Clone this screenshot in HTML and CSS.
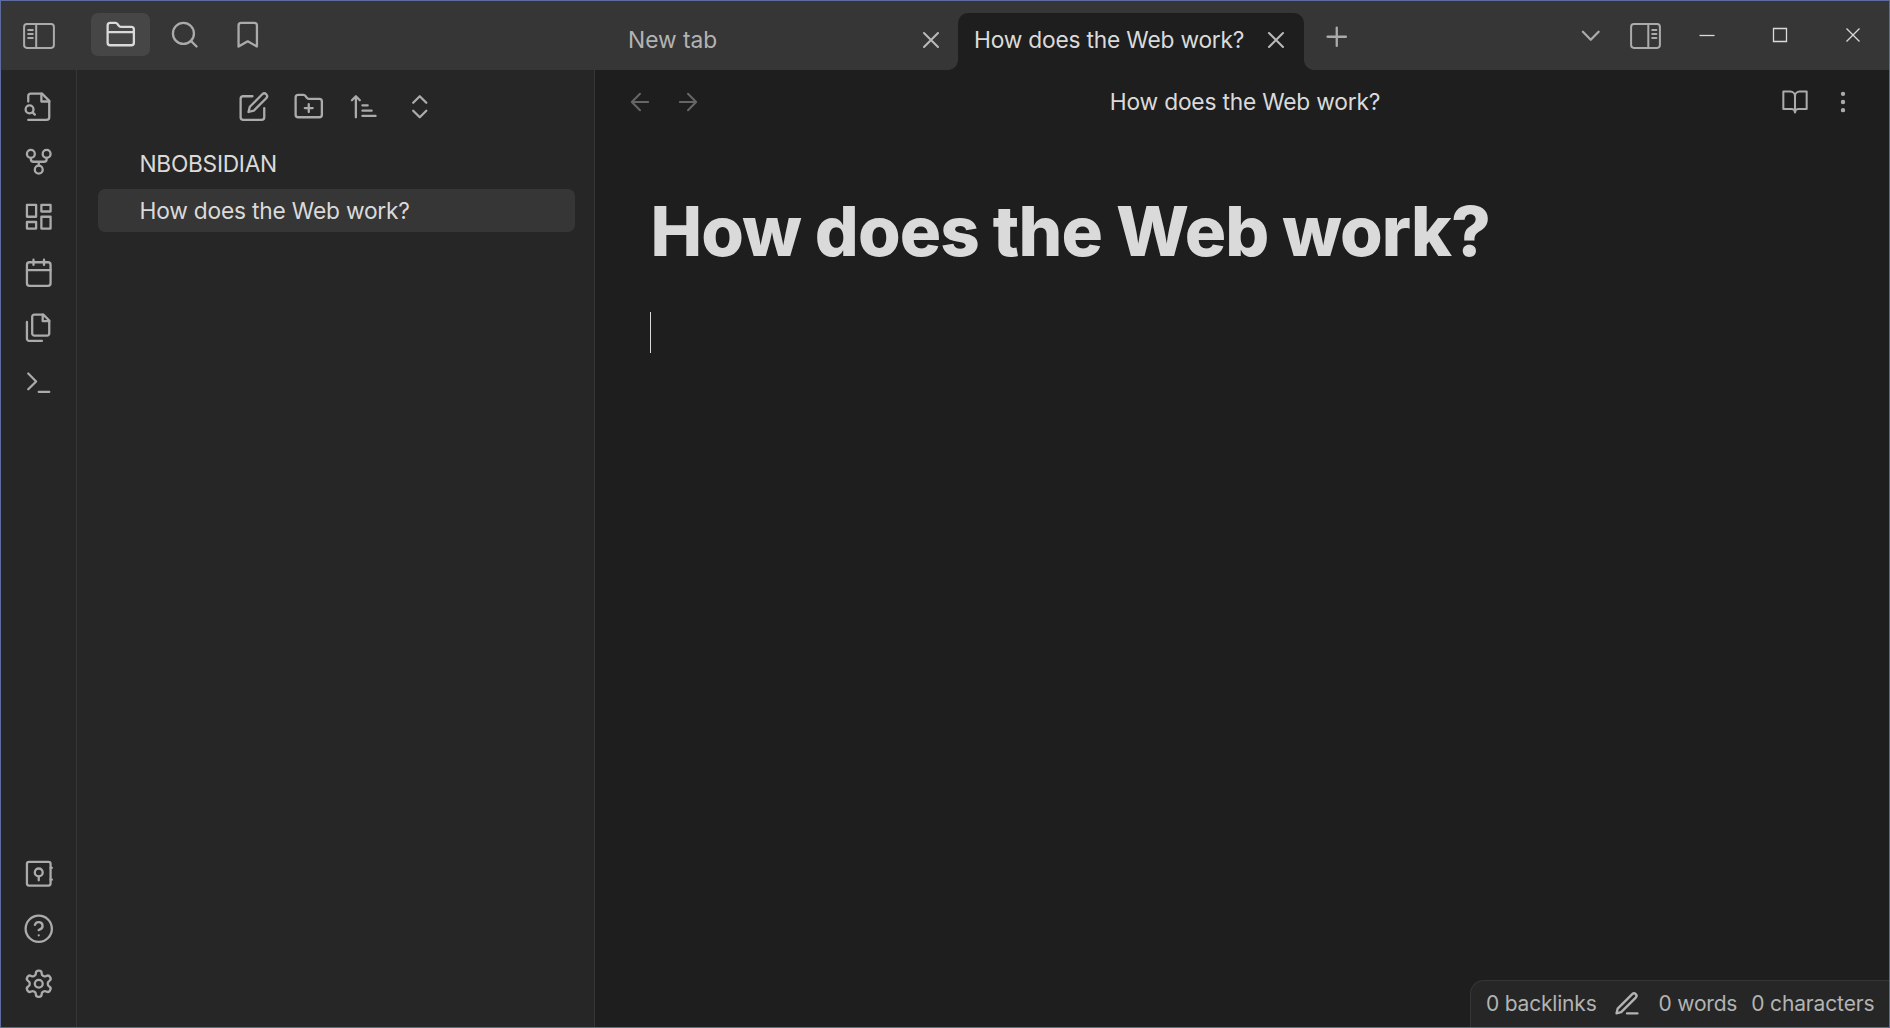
FILE: index.html
```html
<!DOCTYPE html>
<html lang="en">
<head>
<meta charset="utf-8">
<title>How does the Web work? - nbobsidian</title>
<link rel="stylesheet" href="styles.css">
</head>
<body>
<div class="window">
  <header class="titlebar">
    <div class="titlebar-left">
      <button class="panel-toggle" aria-label="Collapse sidebar"><svg class="panel-icon" viewBox="0 0 32 26"><rect x="1.1" y="1.1" width="29.8" height="23.8" rx="2.8"/><path d="M13.2 1v24M5.2 7h4.6M5.2 11h4.6M5.2 15h4.6"/></svg></button>
      <nav class="side-tabs">
        <button class="side-tab active" aria-label="Files"><svg class="icon" viewBox="0 0 24 24"><path d="M4 20h16a2 2 0 0 0 2-2V8a2 2 0 0 0-2-2h-7.93a2 2 0 0 1-1.66-.9l-.82-1.2A2 2 0 0 0 7.93 3H4a2 2 0 0 0-2 2v13c0 1.1.9 2 2 2ZM2 10h20"/></svg></button>
        <button class="side-tab" aria-label="Search"><svg class="icon" viewBox="0 0 24 24"><circle cx="11" cy="11" r="8"/><path d="m21 21-4.3-4.3"/></svg></button>
        <button class="side-tab" aria-label="Bookmarks"><svg class="icon" viewBox="0 0 24 24"><path d="m19 21-7-4-7 4V5a2 2 0 0 1 2-2h10a2 2 0 0 1 2 2v16z"/></svg></button>
      </nav>
    </div>
    <div class="tabs">
      <div class="tab tab-new"><span>New tab</span><svg class="icon small close" viewBox="0 0 24 24"><path d="M18 6 6 18M6 6l12 12"/></svg></div>
      <div class="tab tab-active"><span>How does the Web work?</span><svg class="icon small close" viewBox="0 0 24 24"><path d="M18 6 6 18M6 6l12 12"/></svg></div>
      <button class="add-tab" aria-label="New tab"><svg class="icon" viewBox="0 0 24 24"><path d="M12 5v14M5 12h14"/></svg></button>
    </div>
    <div class="titlebar-right">
      <svg class="icon" viewBox="0 0 24 24"><path d="m6 9 6 6 6-6"/></svg>
      <svg class="panel-icon" viewBox="0 0 32 26"><rect x="1.1" y="1.1" width="28.8" height="23.8" rx="2.8"/><path d="M18.3 1v24M22.2 7h4.2M22.2 11h4.2M22.2 15h4.2"/></svg>
    </div>
    <div class="window-controls">
      <svg viewBox="0 0 16 16"><path d="M.5 8.5h15"/></svg>
      <svg viewBox="0 0 16 16"><path d="M1.5 1.5h13v13h-13z"/></svg>
      <svg viewBox="0 0 16 16"><path d="m1.500 1.500 13 13M14.500 1.500l-13 13"/></svg>
    </div>
  </header>

  <div class="workspace">
    <aside class="ribbon">
      <div class="ribbon-group">
        <svg class="icon" viewBox="0 0 24 24"><path d="M4 8V4a2 2 0 0 1 2-2h8.500L20 7.500V20a2 2 0 0 1-2 2H4"/><path d="M14 2v6h6"/><circle cx="5" cy="14" r="3"/><path d="m9 18-1.500-1.500"/></svg>
        <svg class="icon" viewBox="0 0 24 24"><circle cx="12" cy="18" r="3"/><circle cx="6" cy="6" r="3"/><circle cx="18" cy="6" r="3"/><path d="M18 9v1a2 2 0 0 1-2 2H8a2 2 0 0 1-2-2V9M12 12v3"/></svg>
        <svg class="icon" viewBox="0 0 24 24"><path d="M3 3h7v9H3zM14 3h7v5h-7zM14 12h7v9h-7zM3 16h7v5H3z"/></svg>
        <svg class="icon" viewBox="0 0 24 24"><rect x="3" y="4" width="18" height="18" rx="2"/><path d="M16 2v4M8 2v4M3 10h18"/></svg>
        <svg class="icon" viewBox="0 0 24 24"><path d="M15.500 2H8.600c-.4 0-.8.2-1.100.5-.3.3-.5.7-.5 1.100v12.800c0 .4.2.8.5 1.100.3.3.7.5 1.100.5h9.800c.4 0 .8-.2 1.100-.5.3-.3.5-.7.5-1.100V6.500L15.500 2z"/><path d="M3 7.600v12.800c0 .4.2.8.5 1.100.3.3.7.5 1.100.5h9.800M15 2v5h5"/></svg>
        <svg class="icon" viewBox="0 0 24 24"><path d="m4 17 6-6-6-6M12 19h8"/></svg>
      </div>
      <div class="ribbon-group">
        <svg class="icon" viewBox="0 0 24 24"><rect x="3" y="3" width="18" height="18" rx="1.500"/><circle cx="12" cy="11" r="3"/><path d="M12 14v3M21 7.500h1M21 16.500h1"/></svg>
        <svg class="icon" viewBox="0 0 24 24"><circle cx="12" cy="12" r="10"/><path d="M9.090 9a3 3 0 0 1 5.830 1c0 2-3 3-3 3M12 17h.01"/></svg>
        <svg class="icon" viewBox="0 0 24 24"><path d="M12.220 2h-.44a2 2 0 0 0-2 2v.18a2 2 0 0 1-1 1.730l-.43.25a2 2 0 0 1-2 0l-.15-.08a2 2 0 0 0-2.730.73l-.22.38a2 2 0 0 0 .73 2.730l.15.1a2 2 0 0 1 1 1.720v.51a2 2 0 0 1-1 1.740l-.15.09a2 2 0 0 0-.73 2.730l.22.38a2 2 0 0 0 2.730.73l.15-.08a2 2 0 0 1 2 0l.43.25a2 2 0 0 1 1 1.730V20a2 2 0 0 0 2 2h.44a2 2 0 0 0 2-2v-.18a2 2 0 0 1 1-1.730l.43-.25a2 2 0 0 1 2 0l.15.08a2 2 0 0 0 2.730-.73l.22-.39a2 2 0 0 0-.73-2.730l-.15-.08a2 2 0 0 1-1-1.740v-.5a2 2 0 0 1 1-1.740l.15-.09a2 2 0 0 0 .73-2.730l-.22-.38a2 2 0 0 0-2.730-.73l-.15.08a2 2 0 0 1-2 0l-.43-.25a2 2 0 0 1-1-1.730V4a2 2 0 0 0-2-2z"/><circle cx="12" cy="12" r="3"/></svg>
      </div>
    </aside>

    <section class="explorer">
      <div class="explorer-tools">
        <svg class="icon" viewBox="0 0 24 24"><path d="M11 4H4a2 2 0 0 0-2 2v14a2 2 0 0 0 2 2h14a2 2 0 0 0 2-2v-7"/><path d="M18.500 2.500a2.121 2.121 0 0 1 3 3L12 15l-4 1 1-4 9.500-9.500z"/></svg>
        <svg class="icon" viewBox="0 0 24 24"><path d="M4 20h16a2 2 0 0 0 2-2V8a2 2 0 0 0-2-2h-7.930a2 2 0 0 1-1.660-.9l-.82-1.200A2 2 0 0 0 7.930 3H4a2 2 0 0 0-2 2v13c0 1.100.9 2 2 2ZM12 10v6M9 13h6"/></svg>
        <svg class="icon" viewBox="0 0 24 24"><path d="M11 11h4M11 15h7M11 19h10M9 7 6 4 3 7M6 6v14"/></svg>
        <svg class="icon" viewBox="0 0 24 24"><path d="m7 15 5 5 5-5M7 9l5-5 5 5"/></svg>
      </div>
      <div class="vault-name">NBOBSIDIAN</div>
      <div class="file-row">How does the Web work?</div>
    </section>

    <main class="editor">
      <div class="view-header">
        <div class="nav-arrows">
          <svg class="icon small" viewBox="0 0 24 24"><path d="m12 19-7-7 7-7M19 12H5"/></svg>
          <svg class="icon small" viewBox="0 0 24 24"><path d="M5 12h14M12 5l7 7-7 7"/></svg>
        </div>
        <div class="view-title">How does the Web work?</div>
        <div class="view-actions">
          <svg class="icon small" viewBox="0 0 24 24"><path d="M2 3h6a4 4 0 0 1 4 4v14a3 3 0 0 0-3-3H2zM22 3h-6a4 4 0 0 0-4 4v14a3 3 0 0 1 3-3h7z"/></svg>
          <svg class="icon small" viewBox="0 0 24 24"><circle cx="12" cy="12" r="1"/><circle cx="12" cy="5" r="1"/><circle cx="12" cy="19" r="1"/></svg>
        </div>
      </div>
      <h1 class="note-title">How does the Web work?</h1>
      <div class="caret"></div>
      <footer class="status-bar">
        <span class="backlinks">0 backlinks</span>
        <svg class="icon pen" viewBox="0 0 24 24"><path d="M12 20h9M16.500 3.500a2.120 2.120 0 0 1 3 3L7 19l-4 1 1-4Z"/></svg>
        <span class="words">0 words</span>
        <span class="chars">0 characters</span>
      </footer>
    </main>
  </div>
</div>
</body>
</html>
```
FILE: styles.css
```css
* { box-sizing: border-box; }

body {
  margin: 0;
  background: #1e1e1e;
  color: #dadada;
  font-family: Inter, "Liberation Sans", sans-serif;
  font-size: 22.75px;
  line-height: 30px;
  letter-spacing: -0.2px;
  overflow: hidden;
}

button {
  border: 0;
  padding: 0;
  background: none;
  color: inherit;
  font: inherit;
}

svg {
  display: block;
  flex: none;
  fill: none;
  stroke: currentColor;
}

.icon {
  width: 31.5px;
  height: 31.5px;
  stroke-width: 1.75;
  stroke-linecap: round;
  stroke-linejoin: round;
}

.icon.small { width: 28px; height: 28px; }

.panel-icon {
  width: 32px;
  height: 26px;
  stroke-width: 2;
  stroke-linecap: round;
}

.window {
  display: grid;
  grid-template-rows: 69px 1fr;
  width: 1890px;
  height: 1028px;
  border: 1px solid #5d6b9f;
}

/* Title bar */
.titlebar {
  display: flex;
  background: #363636;
  color: #ababab;
}

.titlebar-left {
  display: flex;
  width: 594px;
  padding: 12px 0 0 22px;
}

.panel-toggle { height: 46px; }

.side-tabs { display: flex; gap: 4.8px; margin-left: 36px; }

.side-tab {
  display: flex;
  align-items: center;
  justify-content: center;
  width: 59px;
  height: 43px;
  padding-top: 1px;
  border-radius: 7px;
}

.side-tab.active { background: #464646; color: #dadada; }

.tabs { display: flex; align-items: flex-end; width: 980px; }

.tab {
  display: flex;
  align-items: center;
  justify-content: space-between;
  height: 57px;
  padding: 0 14px 4px 16px;
  color: #b3b3b3;
}

.tab-new {
  width: 363px;
  padding-left: 33px;
  padding-right: 13px;
  letter-spacing: 0;
}

.tab-active {
  position: relative;
  width: 346px;
  background: #1e1e1e;
  border-radius: 10px 10px 0 0;
  color: #dadada;
}

.tab .close { color: #b9b9b9; }

/* Concave feet that blend the active tab into the pane below */
.tab-active::before,
.tab-active::after {
  content: "";
  position: absolute;
  bottom: 0;
  width: 10px;
  height: 10px;
}

.tab-active::before {
  left: -10px;
  background: radial-gradient(circle at 0 0, transparent 9.5px, #1e1e1e 10.2px);
}

.tab-active::after {
  right: -10px;
  background: radial-gradient(circle at 100% 0, transparent 9.5px, #1e1e1e 10.2px);
}

.add-tab { margin: 0 0 18px 17px; }

.titlebar-right {
  display: flex;
  align-items: center;
  gap: 23px;
  height: 69px;
}

.window-controls {
  display: flex;
  gap: 56.8px;
  margin-left: 37.8px;
  padding-top: 26px;
  color: #dadada;
}

.window-controls svg { width: 16px; height: 16px; stroke-width: 1.3; }

/* Workspace */
.workspace { display: grid; grid-template-columns: 76px 518px 1fr; }

.ribbon {
  display: flex;
  flex-direction: column;
  justify-content: space-between;
  align-items: center;
  padding: 20.7px 0 27.2px;
  border-right: 1px solid #363636;
  background: #262626;
  color: #ababab;
}

.ribbon-group { display: flex; flex-direction: column; gap: 23.8px; }
.ribbon-group + .ribbon-group { gap: 23.6px; }

.explorer {
  padding: 20.5px 19px 0 21px;
  border-right: 1px solid #363636;
  background: #262626;
}

.explorer-tools {
  display: flex;
  gap: 23.7px;
  padding-left: 140px;
  color: #ababab;
}

.vault-name {
  margin-top: 27px;
  padding-left: 41.5px;
  letter-spacing: -0.3px;
}

.file-row {
  height: 43px;
  margin-top: 10px;
  padding-left: 41.5px;
  border-radius: 7px;
  background: #363636;
  line-height: 43px;
}

/* Editor */
.editor {
  display: flex;
  flex-direction: column;
  background: #1e1e1e;
}

.view-header {
  display: grid;
  grid-template-columns: 103px 1fr 96px;
  align-items: center;
  height: 63px;
  padding: 0 32px 0 31px;
}

.nav-arrows { display: flex; gap: 20px; color: #666; }

.view-title { text-align: center; }

.view-actions {
  display: flex;
  justify-content: flex-end;
  gap: 20px;
  color: #ababab;
}

.note-title {
  margin: 56px 0 0 55.5px;
  font-size: 69px;
  font-weight: 800;
  line-height: 84px;
  letter-spacing: -0.96px;
}

.caret {
  width: 1px;
  height: 41px;
  margin: 39px 0 0 55px;
  background: #dadada;
}

.status-bar {
  display: flex;
  align-items: center;
  align-self: flex-end;
  width: 419px;
  height: 47px;
  margin-top: auto;
  padding-left: 15px;
  border: 1px solid #363636;
  border-width: 1px 0 0 1px;
  border-radius: 14px 0 0 0;
  background: #262626;
  color: #b3b3b3;
  font-size: 21px;
  white-space: nowrap;
}

.status-bar .pen { width: 28px; height: 28px; stroke-width: 2; margin-left: 16.5px; }
.words { margin-left: 17.5px; }
.chars { margin-left: 14px; letter-spacing: -0.14px; }
```
